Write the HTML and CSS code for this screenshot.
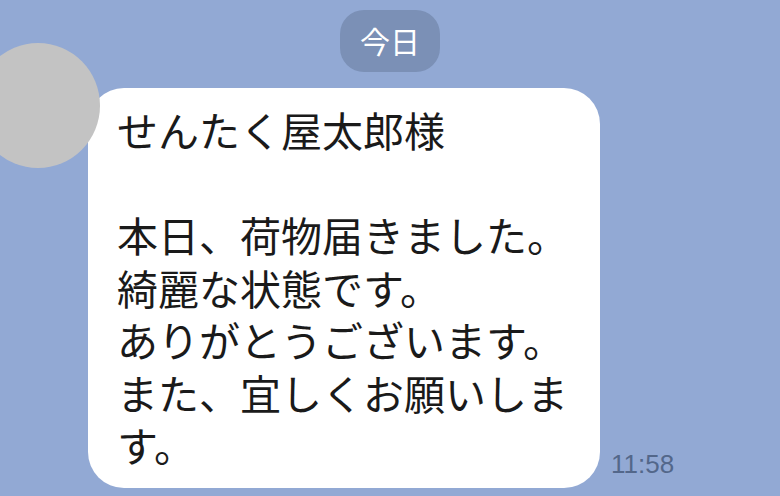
FILE: index.html
```html
<!DOCTYPE html>
<html lang="ja">
<head>
    <meta charset="UTF-8">
    <meta name="viewport" content="width=device-width, initial-scale=1.0">
    <title>今日</title>
    <link rel="stylesheet" href="styles.css">
</head>
<body>
    <div class="date-row">
        <div class="date-pill">今日</div>
    </div>
    <div class="message-row">
        <div class="avatar"></div>
        <div class="bubble">せんたく屋太郎様<br><br>本日、荷物届きました。<br>綺麗な状態です。<br>ありがとうございます。<br>また、宜しくお願いしま<br>す。</div>
        <div class="time">11:58</div>
    </div>
</body>
</html>
```

FILE: styles.css
```css
body {
    margin: 0;
    height: 496px;
    overflow: hidden;
    background-color: #92a9d4;
    font-family: "Noto Sans CJK JP", "Liberation Sans", sans-serif;
}

.date-row {
    display: flex;
    justify-content: center;
    padding-top: 10px;
}

.date-pill {
    width: 100px;
    height: 62px;
    border-radius: 24px;
    background: #7b90b6;
    color: #fff;
    font-size: 30px;
    line-height: 60px;
    text-align: center;
}

.message-row {
    position: relative;
    display: flex;
    align-items: flex-end;
    gap: 11px;
    margin-top: 16px;
    padding-left: 88px;
}

.avatar {
    position: absolute;
    left: -24px;
    top: -45px;
    width: 124px;
    height: 125px;
    border-radius: 50%;
    background: #c3c3c3;
}

.bubble {
    box-sizing: border-box;
    width: 512px;
    height: 400px;
    padding: 15px 20px 0 29px;
    border-radius: 36px;
    background: #fff;
    color: #1a1a1a;
    font-size: 41px;
    line-height: 52.5px;
}

.time {
    padding-bottom: 9px;
    color: #53678a;
    font-family: "Liberation Sans", sans-serif;
    font-size: 26px;
    line-height: 30px;
}
```
